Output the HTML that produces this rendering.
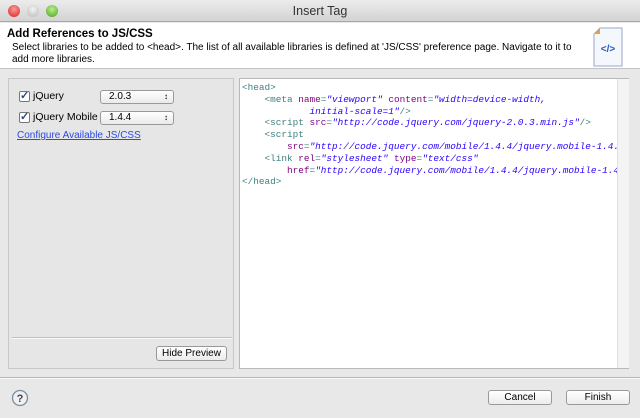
<!DOCTYPE html>
<html><head><style>
*{margin:0;padding:0;box-sizing:border-box}
body{width:640px;height:418px;overflow:hidden;background:#e8e8e8;font-family:"Liberation Sans",sans-serif;font-size:11px;color:#000;position:relative}
.abs{position:absolute}
#title{left:0;top:0;width:640px;height:22px;background:linear-gradient(#ececec,#d3d3d3);border-bottom:1px solid #a8a8a8;text-align:center;font-size:12.5px;line-height:22px;color:#333}
.dot{width:12px;height:12px;border-radius:50%;top:5px}
#hdr{left:0;top:23px;width:640px;height:46px;background:#fff;border-bottom:1px solid #c4c4c4}
.panel{border:1px solid #c8c8c8}
#left{left:8px;top:78px;width:226px;height:291px;background:#e6e6e6}
#ed{left:239px;top:78px;width:390px;height:291px;background:#fff;border:1px solid #b8b8b8}
#sb{left:377px;top:0;width:12px;height:289px;background:#f4f4f4;border-left:1px solid #e0e0e0}
.cb{width:11px;height:11px;border:1px solid #777;border-radius:2px;background:#fff;font-size:11px;line-height:9px;color:#2a4a8a;text-align:center;font-weight:bold}
.sel{width:74px;height:14px;border:1px solid #999;border-radius:3px;background:linear-gradient(#fff,#eaeaea);font-size:10px;line-height:12px;padding-left:8px}
.sel:after{content:"\2195";position:absolute;right:5px;top:0;font-size:8px}
pre{font-family:"Liberation Mono",monospace;font-size:9.4px;line-height:11.8px;position:absolute;left:2px;top:3px;color:#3f7f7f}
.a{color:#7f007f}.v{color:#2a00ff;font-style:italic}
.btn{height:15px;border:1px solid #999;border-radius:3px;background:linear-gradient(#fff,#ececec);font-size:10px;line-height:13px;text-align:center}
</style></head><body>
<div id="title" class="abs">Insert Tag</div>
<div class="abs dot" style="left:8px;background:radial-gradient(circle at 50% 35%,#ff9a9a,#d42020)"></div>
<div class="abs dot" style="left:27px;background:radial-gradient(circle at 50% 35%,#f4f4f4,#b8b8b8)"></div>
<div class="abs dot" style="left:46px;background:radial-gradient(circle at 50% 35%,#b8f08a,#4aa21e)"></div>
<div id="hdr" class="abs">
<div class="abs" style="left:7px;top:5px;font-weight:bold;font-size:11.5px">Add References to JS/CSS</div>
<div class="abs" style="left:12px;top:19px;font-size:10px;line-height:11.5px;width:570px">Select libraries to be added to &lt;head&gt;. The list of all available libraries is defined at 'JS/CSS' preference page. Navigate to it to add more libraries.</div>
<svg class="abs" style="left:592px;top:4px" width="32" height="40"><path d="M8 1H30V39H2V7Z" fill="#f4f7fc" stroke="#9aaac8"/><path d="M2 7L8 1V7Z" fill="#e8a040"/><text x="16" y="25" font-size="10" font-weight="bold" fill="#2a5ab0" text-anchor="middle" font-family="Liberation Sans">&lt;/&gt;</text></svg>
</div>
<div id="left" class="abs panel">
<div class="abs cb" style="left:10px;top:12px">✓</div>
<div class="abs" style="left:24px;top:11px;font-size:10.5px">jQuery</div>
<div class="abs sel" style="left:91px;top:11px">2.0.3</div>
<div class="abs cb" style="left:10px;top:33px">✓</div>
<div class="abs" style="left:24px;top:32px;font-size:10.5px">jQuery Mobile</div>
<div class="abs sel" style="left:91px;top:32px">1.4.4</div>
<div class="abs" style="left:8px;top:51px;font-size:10px;color:#2a4ae0;text-decoration:underline">Configure Available JS/CSS</div>
<div class="abs" style="left:3px;top:258px;width:220px;border-top:1px solid #c0c0c0;border-bottom:1px solid #fafafa"></div>
<div class="abs btn" style="left:147px;top:267px;width:71px">Hide Preview</div>
</div>
<div id="ed" class="abs">
<pre>&lt;head&gt;
    &lt;meta <span class="a">name</span>=<span class="v">"viewport"</span> <span class="a">content</span>=<span class="v">"width=device-width,
            initial-scale=1"</span>/&gt;
    &lt;script <span class="a">src</span>=<span class="v">"http://code.jquery.com/jquery-2.0.3.min.js"</span>/&gt;
    &lt;script
        <span class="a">src</span>=<span class="v">"http://code.jquery.com/mobile/1.4.4/jquery.mobile-1.4.4</span>
    &lt;link <span class="a">rel</span>=<span class="v">"stylesheet"</span> <span class="a">type</span>=<span class="v">"text/css"</span>
        <span class="a">href</span>=<span class="v">"http://code.jquery.com/mobile/1.4.4/jquery.mobile-1.4.</span>
&lt;/head&gt;</pre>
<div id="sb" class="abs"></div>
</div>
<div class="abs" style="left:0;top:377px;width:640px;border-top:1px solid #b8b8b8;border-bottom:1px solid #f8f8f8"></div>
<svg class="abs" style="left:11px;top:389px" width="18" height="18"><circle cx="9" cy="9" r="7.5" fill="#f0f0f0" stroke="#7a8aa0" stroke-width="1.3"/><text x="9" y="13" font-size="11" font-weight="bold" fill="#445" text-anchor="middle" font-family="Liberation Sans">?</text></svg>
<div class="abs btn" style="left:488px;top:390px;width:64px">Cancel</div>
<div class="abs btn" style="left:566px;top:390px;width:64px">Finish</div>
</body></html>
